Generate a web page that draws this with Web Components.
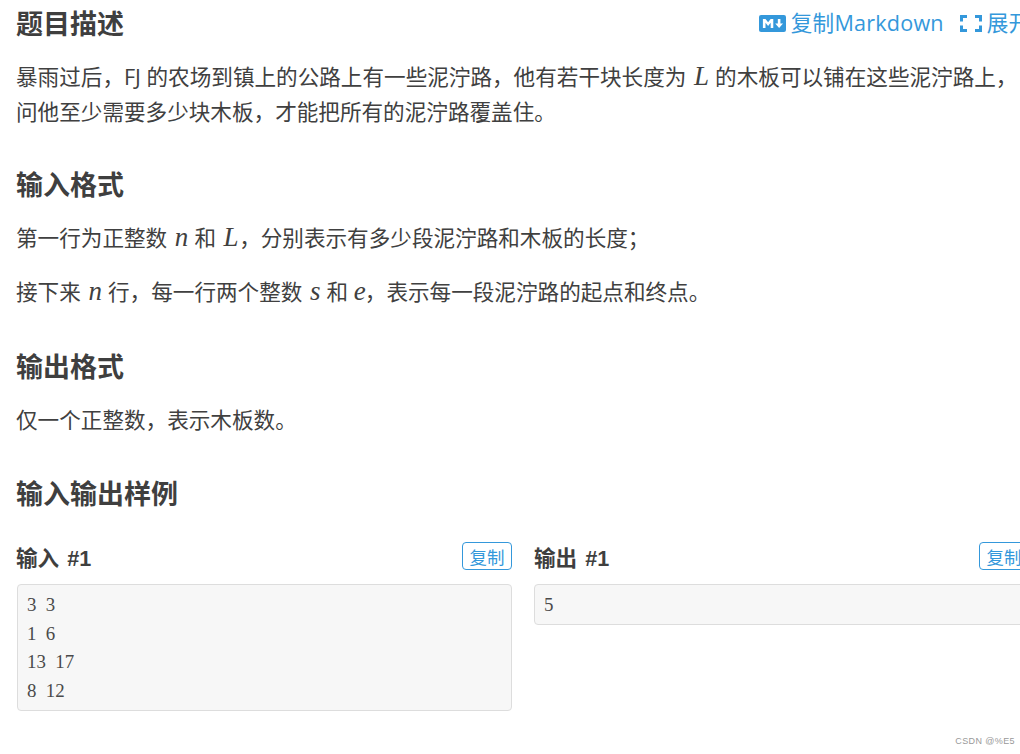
<!DOCTYPE html>
<html lang="zh">
<head>
<meta charset="utf-8">
<title>题目描述</title>
<style>
    html, body { margin: 0; height: 100%; overflow: hidden; background: #fff; }
    body {
        color: #404040;
        font-family: "Open Sans", "Noto Sans CJK SC", sans-serif;
        font-size: 21.6px;
    }
</style>
</head>
<body>
<problem-page>
    <problem-section title="题目描述" first>
        <icon-link slot="actions" icon="markdown">复制Markdown</icon-link>
        <icon-link slot="actions" icon="expand">展开</icon-link>
        <p>暴雨过后&#xFF0C;FJ 的农场到镇上的公路上有一些泥泞路&#xFF0C;他有若干块长度为 <math-var>L</math-var> 的木板可以铺在这些泥泞路上&#xFF0C;问他至少需要多少块木板&#xFF0C;才能把所有的泥泞路覆盖住。</p>
    </problem-section>
    <problem-section title="输入格式" style="margin-top: 32px">
        <p>第一行为正整数 <math-var>n</math-var> 和 <math-var>L</math-var>&#xFF0C;分别表示有多少段泥泞路和木板的长度&#xFF1B;</p>
        <p class="next">接下来 <math-var>n</math-var> 行&#xFF0C;每一行两个整数 <math-var>s</math-var> 和 <math-var style="margin: 0 -1px 0 0">e</math-var>&#xFF0C;表示每一段泥泞路的起点和终点。</p>
    </problem-section>
    <problem-section title="输出格式" style="margin-top: 34px">
        <p>仅一个正整数&#xFF0C;表示木板数。</p>
    </problem-section>
    <problem-section title="输入输出样例">
        <sample-pair>
            <sample-box label="输入 #1" first>3 3
1 6
13 17
8 12</sample-box>
            <sample-box label="输出 #1">5</sample-box>
        </sample-pair>
    </problem-section>
</problem-page>
<water-mark>CSDN @%E5</water-mark>

<script>
// 页面容器
class ProblemPage extends HTMLElement {
    constructor() {
        super();
        this.attachShadow({ mode: 'open' });
        this.shadowRoot.innerHTML = `
            <style>
                :host {
                    display: block;
                    width: 1014px;
                    padding-left: 16px;
                }
            </style>
            <slot></slot>
        `;
    }
}

// 标题 + 内容
class ProblemSection extends HTMLElement {
    constructor() {
        super();
        this.attachShadow({ mode: 'open' });
        this.shadowRoot.innerHTML = `
            <style>
                :host {
                    display: block;
                    margin-top: 33px;
                }
                :host([first]) {
                    margin-top: 0;
                }
                .head {
                    display: flex;
                    justify-content: space-between;
                    align-items: center;
                    height: 48px;
                    margin-bottom: 11px;
                }
                h2 {
                    margin: 0;
                    font-size: 27px;
                    font-weight: 700;
                    line-height: 48px;
                    color: #3f3f3f;
                }
                .actions {
                    display: flex;
                    gap: 16px;
                    margin-bottom: 2px;
                }
                ::slotted(p) {
                    margin: 0 0 20px;
                    line-height: 35px;
                }
                ::slotted(p.next) {
                    margin-top: -1px;
                }
            </style>
            <div class="head">
                <h2></h2>
                <div class="actions"><slot name="actions"></slot></div>
            </div>
            <slot></slot>
        `;
    }

    connectedCallback() {
        this.shadowRoot.querySelector('h2').textContent = this.getAttribute('title');
        this.removeAttribute('title');
    }
}

// 顶部蓝色链接
class IconLink extends HTMLElement {
    constructor() {
        super();
        this.attachShadow({ mode: 'open' });
    }

    connectedCallback() {
        const icons = {
            markdown: `<svg width="27" height="17" viewBox="0 0 208 131"><rect width="208" height="131" rx="16" fill="#3498db"/><path fill="#fff" d="M30 100V30h20l20 25 20-25h20v70H90V60L70 85 50 60v40zm125 0l-30-34h20V30h20v36h20z"/></svg>`,
            expand: `<svg width="22" height="17" viewBox="0 0 22 17" fill="none" stroke="#3498db" stroke-width="3"><path d="M7 1.5H1.5V6.5M1.5 10.5v5H7M15 1.5h5.5V6.5M20.5 10.5v5H15"/></svg>`
        };
        this.shadowRoot.innerHTML = `
            <style>
                :host {
                    display: inline-flex;
                    align-items: center;
                    gap: 5px;
                    color: #3498db;
                    font-size: 21.6px;
                    line-height: 30px;
                }
                svg { display: block; }
                span[data-icon="markdown"] { letter-spacing: 0.2px; }
            </style>
            ${icons[this.getAttribute('icon')] || ''}<span data-icon="${this.getAttribute('icon')}"><slot></slot></span>
        `;
    }
}

// 公式变量
class MathVar extends HTMLElement {
    constructor() {
        super();
        this.attachShadow({ mode: 'open' });
        // slot 前后不留空白,否则逗号前会多一个空格
        this.shadowRoot.innerHTML = `<style>
                :host {
                    display: inline;
                    font-family: "Liberation Serif", serif;
                    font-style: italic;
                    font-size: 27px;
                    line-height: 1;
                    margin: 0 0.5px 0 2px;
                }
            </style><slot></slot>`;
    }
}

class SamplePair extends HTMLElement {
    constructor() {
        super();
        this.attachShadow({ mode: 'open' });
        this.shadowRoot.innerHTML = `
            <style>
                :host {
                    display: grid;
                    grid-template-columns: 495px 495px;
                    column-gap: 22px;
                    align-items: start;
                    margin-top: 24px;
                    padding-left: 1px;
                }
            </style>
            <slot></slot>
        `;
    }
}

// 样例框
class SampleBox extends HTMLElement {
    constructor() {
        super();
        this.attachShadow({ mode: 'open' });
        this.shadowRoot.innerHTML = `
            <style>
                :host { display: block; }
                .top {
                    display: flex;
                    justify-content: space-between;
                    align-items: center;
                    height: 28px;
                    margin-bottom: 14px;
                }
                .label {
                    font-family: "Liberation Sans", "Noto Sans CJK SC", sans-serif;
                    font-size: 21.6px;
                    font-weight: 700;
                    word-spacing: 2px;
                    color: #3f3f3f;
                }
                :host([first]) .label { margin-left: -1px; }
                button {
                    box-sizing: border-box;
                    width: 50px;
                    height: 28px;
                    padding: 0;
                    border: 1px solid #3498db;
                    border-radius: 4px;
                    background: #fff;
                    color: #3498db;
                    font: 17.5px "Noto Sans CJK SC", sans-serif;
                }
                pre {
                    box-sizing: border-box;
                    margin: 0;
                    padding: 6px 9px 4px;
                    border: 1px solid #ddd;
                    border-radius: 4px;
                    background: #f7f7f7;
                    color: #4a4a4a;
                    font-family: "Liberation Serif", serif;
                    font-size: 18.9px;
                    line-height: 28.7px;
                    word-spacing: 4.7px;
                }
            </style>
            <div class="top">
                <span class="label"></span>
                <button>复制</button>
            </div>
            <pre><slot></slot></pre>
        `;
    }

    connectedCallback() {
        this.shadowRoot.querySelector('.label').textContent = this.getAttribute('label');
    }
}

// 右下角水印
class WaterMark extends HTMLElement {
    constructor() {
        super();
        this.attachShadow({ mode: 'open' });
        this.shadowRoot.innerHTML = `
            <style>
                :host {
                    position: absolute;
                    right: 5px;
                    top: 735px;
                    color: #999;
                    font: 9px/13px "Liberation Sans", sans-serif;
                    letter-spacing: 0.4px;
                }
            </style>
            <slot></slot>
        `;
    }
}

customElements.define('problem-page', ProblemPage);
customElements.define('problem-section', ProblemSection);
customElements.define('icon-link', IconLink);
customElements.define('math-var', MathVar);
customElements.define('sample-pair', SamplePair);
customElements.define('sample-box', SampleBox);
customElements.define('water-mark', WaterMark);
</script>
</body>
</html>
